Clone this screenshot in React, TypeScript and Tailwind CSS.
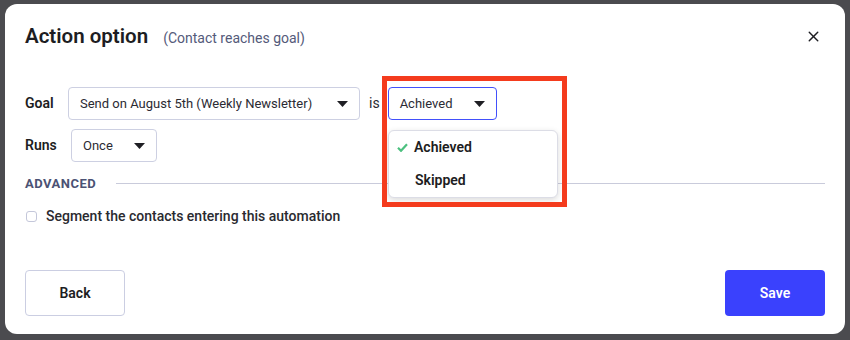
import { X } from 'lucide-react'

function Caret() {
  return (
    <svg width="11" height="6" viewBox="0 0 11 6" className="shrink-0">
      <path d="M0 0h11L5.5 6z" fill="#1f1f24" />
    </svg>
  )
}

function SelectBox({
  value,
  className = '',
}: {
  value: string
  className?: string
}) {
  return (
    <div
      className={`flex h-[33px] items-center justify-between rounded-[4px] border bg-white pl-[11px] pr-[11px] text-[13px] text-[#2b2b33] ${className}`}
    >
      <span>{value}</span>
      <Caret />
    </div>
  )
}

export default function App() {
  return (
    <div
      className="relative h-[340px] w-[850px] overflow-hidden bg-[#4b4b4f] pl-[5px] pt-[4px]"
      style={{ fontFamily: 'Roboto, "Noto Sans", sans-serif' }}
    >
      <div className="relative flex h-[330px] w-[840px] flex-col rounded-[12px] bg-white px-[20px] pb-[18px]">
        {/* Header */}
        <div className="mt-[18px] flex h-[28px] items-center justify-between">
          <div className="flex items-baseline gap-[15px]">
            <h1 className="text-[20.5px] font-semibold text-[#1d1d22]">Action option</h1>
            <span className="text-[14px] text-[#545a7a]">(Contact reaches goal)</span>
          </div>
          <X className="mr-[3px] h-[17px] w-[17px] text-[#1d1d22]" strokeWidth={2} />
        </div>

        {/* Goal */}
        <div className="mt-[37px] flex items-center">
          <span className="w-[43px] text-[14px] font-semibold text-[#1d1d22]">Goal</span>
          <SelectBox
            value="Send on August 5th (Weekly Newsletter)"
            className="w-[292px] border-[#cdd0e2]"
          />
          <span className="ml-[9px] mr-[8px] text-[14px] text-[#2b2b33]">is</span>
          <SelectBox value="Achieved" className="w-[109px] border-[#4250fb]" />
        </div>

        {/* Runs */}
        <div className="mt-[9px] flex items-center">
          <span className="w-[46px] text-[14px] font-semibold text-[#1d1d22]">Runs</span>
          <SelectBox value="Once" className="w-[86px] border-[#cdd0e2]" />
        </div>

        {/* Advanced */}
        <div className="mt-[12px] flex items-center gap-[20px]">
          <span className="text-[13px] font-bold tracking-[0.5px] text-[#4b5274]">ADVANCED</span>
          <div className="h-px flex-1 bg-[#c9cbdb]" />
        </div>

        <label className="mt-[12px] flex items-center gap-[9px]">
          <span className="ml-[1px] h-[11px] w-[11px] rounded-[3px] border border-[#c4c7da] bg-white" />
          <span className="text-[14px] font-medium text-[#2a2a30]">
            Segment the contacts entering this automation
          </span>
        </label>

        {/* Footer */}
        <div className="mt-auto flex justify-between">
          <button className="h-[46px] w-[100px] rounded-[4px] border border-[#cbcee2] text-[14px] font-semibold text-[#1d1d22]">
            Back
          </button>
          <button className="h-[46px] w-[100px] rounded-[4px] bg-[#3a41fd] text-[14px] font-semibold text-white">
            Save
          </button>
        </div>
      </div>

      {/* Dropdown menu */}
      <div className="absolute left-[388px] top-[130px] w-[170px] rounded-[6px] border border-[#dcdde6] bg-white shadow-[0_2px_6px_rgba(0,0,0,0.15)]">
        <div className="flex h-[33px] items-center pl-[8px] text-[14px] font-semibold text-[#1d1d22]">
          <svg width="11" height="9" viewBox="0 0 11 9" className="mr-[6px]">
            <path d="M1 4.8l3 3L10 1.2" fill="none" stroke="#4cc07f" strokeWidth="2.2" />
          </svg>
          Achieved
        </div>
        <div className="flex h-[33px] items-center pl-[26px] text-[14px] font-semibold text-[#1d1d22]">
          Skipped
        </div>
      </div>

      {/* Highlight annotation */}
      <div className="pointer-events-none absolute left-[382px] top-[76px] h-[131px] w-[185px] border-[5px] border-[#f43b1d]" />
    </div>
  )
}
